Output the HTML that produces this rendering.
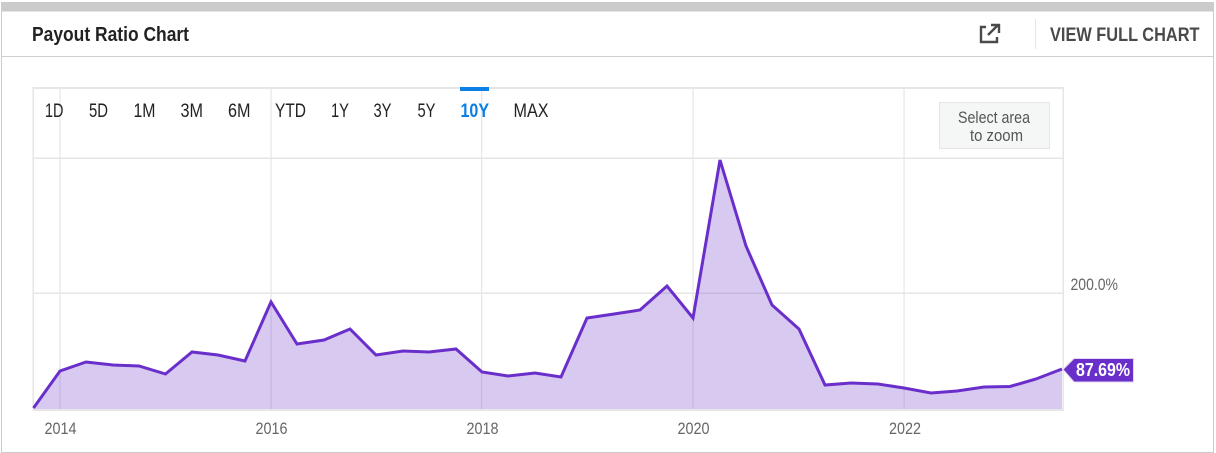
<!DOCTYPE html>
<html><head><meta charset="utf-8"><style>
html,body{margin:0;padding:0;background:#fff;width:1216px;height:453px;overflow:hidden}
svg{display:block}
text{font-family:"Liberation Sans Narrow","Liberation Sans",sans-serif}
</style></head><body>
<svg width="1216" height="453" viewBox="0 0 1216 453" xmlns="http://www.w3.org/2000/svg">
<rect x="1" y="2" width="1213" height="9" fill="#cbcbcb"/>
<rect x="1.5" y="11" width="1212" height="441.5" fill="#fff" stroke="#cbcbcb"/>
<rect x="2" y="56" width="1211" height="1" fill="#cfcfcf"/>
<text x="32" y="41" font-size="20" font-weight="700" fill="#222" textLength="157" lengthAdjust="spacingAndGlyphs">Payout Ratio Chart</text>
<path d="M986 27H981V42H997V37" fill="none" stroke="#4a4a4a" stroke-width="2.4"/>
<path d="M988 35L998 25M991 25H999V33" fill="none" stroke="#4a4a4a" stroke-width="2.4"/>
<rect x="1035" y="19" width="1" height="30" fill="#e6e6e6"/>
<text x="1050" y="41" font-size="19.500" font-weight="700" fill="#4a4a4a" textLength="149.500" lengthAdjust="spacingAndGlyphs">VIEW FULL CHART</text>

<g fill="#e6e6e6">
<rect x="32.500" y="87" width="1031.500" height="2"/>
<rect x="33" y="157.500" width="1030" height="1.500"/>
<rect x="33" y="292.500" width="1030" height="1.500"/>
<rect x="32.500" y="87" width="1.500" height="324"/>
<rect x="1062.500" y="87" width="1.500" height="324"/>
<rect x="32.500" y="409" width="1031.500" height="2"/>
<rect x="59.500" y="88" width="1.200" height="322"/>
<rect x="270.500" y="88" width="1.200" height="322"/>
<rect x="481" y="88" width="1.200" height="322"/>
<rect x="692.500" y="88" width="1.200" height="322"/>
<rect x="903.500" y="88" width="1.200" height="322"/>
</g>

<path d="M33.500,408 L60,371 L86,362 L113,365 L139,366 L165.500,374 L192,352 L218,355 L245,361 L271,302 L297,344 L324,340 L350,329 L376,355 L403,351 L429,352 L456,349 L482,372 L508,376 L535,373 L561,377 L587,318 L614,314 L640,310 L667,286 L693,318 L720,160 L746,246 L772,305 L799,329 L825,385 L851,383 L878,384 L904,388 L931,393 L957,391 L984,387 L1010,386.500 L1036,379 L1062,369 L1062,409 L33.500,409Z" fill="#6a2fca" fill-opacity=".26"/>
<path d="M33.500,408 L60,371 L86,362 L113,365 L139,366 L165.500,374 L192,352 L218,355 L245,361 L271,302 L297,344 L324,340 L350,329 L376,355 L403,351 L429,352 L456,349 L482,372 L508,376 L535,373 L561,377 L587,318 L614,314 L640,310 L667,286 L693,318 L720,160 L746,246 L772,305 L799,329 L825,385 L851,383 L878,384 L904,388 L931,393 L957,391 L984,387 L1010,386.500 L1036,379 L1062,369" fill="none" stroke="#6a2fca" stroke-width="3" stroke-linejoin="miter"/>

<g font-size="19" fill="#222">
<text x="45" y="117" textLength="18.500" lengthAdjust="spacingAndGlyphs">1D</text>
<text x="89" y="117" textLength="19" lengthAdjust="spacingAndGlyphs">5D</text>
<text x="133.500" y="117" textLength="22" lengthAdjust="spacingAndGlyphs">1M</text>
<text x="180.500" y="117" textLength="22.500" lengthAdjust="spacingAndGlyphs">3M</text>
<text x="228" y="117" textLength="22.500" lengthAdjust="spacingAndGlyphs">6M</text>
<text x="275" y="117" textLength="31" lengthAdjust="spacingAndGlyphs">YTD</text>
<text x="331" y="117" textLength="18" lengthAdjust="spacingAndGlyphs">1Y</text>
<text x="373.500" y="117" textLength="18" lengthAdjust="spacingAndGlyphs">3Y</text>
<text x="417.500" y="117" textLength="18" lengthAdjust="spacingAndGlyphs">5Y</text>
<text x="460.500" y="117" textLength="28.500" lengthAdjust="spacingAndGlyphs" fill="#0a7fe6" font-weight="700">10Y</text>
<text x="513.500" y="117" textLength="35" lengthAdjust="spacingAndGlyphs">MAX</text>
</g>
<rect x="460" y="87" width="29" height="4" fill="#0a7fe6"/>

<rect x="939.500" y="102.500" width="110" height="46" fill="#f5f7f7" stroke="#e6e6e6"/>
<text x="958" y="123" font-size="17" fill="#555" textLength="72" lengthAdjust="spacingAndGlyphs">Select area</text>
<text x="970" y="141" font-size="17" fill="#555" textLength="53" lengthAdjust="spacingAndGlyphs">to zoom</text>

<text x="1070.500" y="290" font-size="17" fill="#666" textLength="47.500" lengthAdjust="spacingAndGlyphs">200.0%</text>

<g font-size="17" fill="#666">
<text x="44.500" y="434" textLength="32" lengthAdjust="spacingAndGlyphs">2014</text>
<text x="255.500" y="434" textLength="32" lengthAdjust="spacingAndGlyphs">2016</text>
<text x="466.500" y="434" textLength="32" lengthAdjust="spacingAndGlyphs">2018</text>
<text x="677.500" y="434" textLength="32" lengthAdjust="spacingAndGlyphs">2020</text>
<text x="889" y="434" textLength="32" lengthAdjust="spacingAndGlyphs">2022</text>
</g>

<path d="M1063 369.500L1074 358.500H1133.500V382H1074Z" fill="#6a2fca" stroke="#e2d8f5" stroke-width="1"/>
<text x="1076" y="376" font-size="18" font-weight="700" fill="#fff" textLength="54" lengthAdjust="spacingAndGlyphs">87.69%</text>
</svg>
</body></html>
